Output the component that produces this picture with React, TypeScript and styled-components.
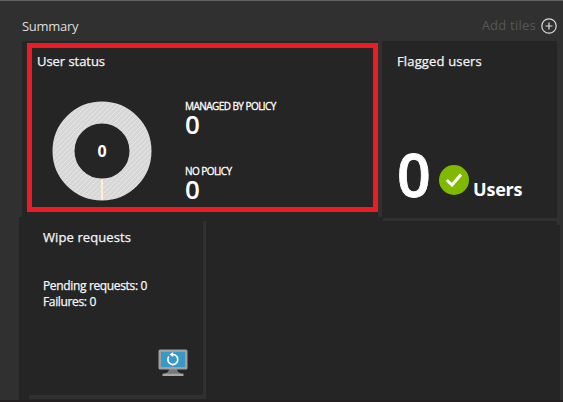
import React from 'react';
import styled, { createGlobalStyle } from 'styled-components';

const GlobalStyle = createGlobalStyle`
  * { box-sizing: border-box; }
  body { margin: 0; background: #303030; overflow: hidden; }
`;

const Page = styled.main`
  display: flex;
  flex-direction: column;
  width: 563px;
  height: 402px;
  border-top: 1px solid #626463;
  background: #303030;
  color: #fff;
  font-family: "Open Sans", "Noto Sans", sans-serif;
`;

const Header = styled.header`
  display: flex;
  justify-content: space-between;
  flex: none;
  height: 40px;
  padding: 15px 6px 0 22px;
`;

const Heading = styled.h1`
  margin: 0;
  color: #dedede;
  font-size: 13px;
  font-weight: 400;
  line-height: 20px;
  letter-spacing: -0.3px;
`;

const AddTiles = styled.button`
  display: flex;
  align-items: center;
  gap: 5px;
  height: 20px;
  padding: 0;
  border: 0;
  background: none;
  color: #555857;
  font: 400 13px/20px "Open Sans", sans-serif;
  letter-spacing: 0.24px;
`;

const AddLabel = styled.span`
  padding-bottom: 2px;
`;

const TopRow = styled.div`
  display: flex;
  gap: 4px;
  flex: none;
  height: 176px;
  padding: 0 6px 0 22px;
`;

const StatusTile = styled.section`
  width: 356px;
  padding: 2px 0 5px 5px;
  background: #252525;
`;

const Highlight = styled.div`
  height: 169px;
  padding: 4px 5px 0;
  border: 5px solid #ed1c24;
`;

const FlaggedTile = styled.section`
  width: 175px;
  padding: 11px 15px 0;
  background: #252525;
`;

const TileTitle = styled.h2`
  margin: 0;
  color: #f5f5f5;
  font-size: 13px;
  font-weight: 400;
  line-height: 18px;
  letter-spacing: ${({ $spacing = 0 }: { $spacing?: number }) => $spacing}px;
  white-space: nowrap;
  -webkit-text-stroke: 0.25px #f5f5f5;
`;

const StatusBody = styled.div`
  display: flex;
  padding: 30px 0 0 15px;
`;

const Metrics = styled.dl`
  display: grid;
  grid-auto-rows: 65px;
  margin: 0 0 0 33px;
`;

const Metric = styled.div`
  white-space: nowrap;
`;

const MetricLabel = styled.dt`
  font-size: 10px;
  line-height: 12px;
  letter-spacing: ${({ $spacing }: { $spacing: number }) => $spacing}px;
  -webkit-text-stroke: 0.3px #fff;
`;

const MetricValue = styled.dd`
  margin: -1px 0 0;
  font-size: 26px;
  font-weight: 600;
  line-height: 26px;
`;

const FlaggedBody = styled.div`
  display: flex;
  padding-top: 67px;
`;

const BigCount = styled.strong`
  width: 33px;
  font-family: "Open Sans", sans-serif;
  font-size: 59px;
  font-weight: 600;
  line-height: 74px;
  letter-spacing: -1px;
  -webkit-text-stroke: 0.8px #fff;
`;

const CheckIcon = styled.svg`
  margin: 28px 0 0 9px;
`;

const CountUnit = styled.strong`
  margin: 40px 0 0 4px;
  font-size: 18px;
  font-weight: 700;
  line-height: 24px;
  letter-spacing: -0.2px;
`;

const BottomRow = styled.div`
  display: flex;
  flex: none;
  width: 541px;
  height: 183px;
  margin-left: 19px;
  background: #252525;
`;

const WipeTile = styled.section`
  display: flex;
  flex-direction: column;
  width: 187px;
  height: 181px;
  padding: 11px 0 0 24px;
`;

const WipeStats = styled.p`
  margin: 32px 0 0;
  color: #f7f7f7;
  font-size: 12px;
  line-height: 16px;
  letter-spacing: -0.35px;
  white-space: nowrap;
  -webkit-text-stroke: 0.25px #f7f7f7;
`;

const WipeIcon = styled.svg`
  margin: 39px 0 0 115px;
`;

const Edges = styled.svg`
  position: absolute;
  top: 217px;
  left: 0;
  pointer-events: none;
`;

const BottomEdge = styled.div`
  flex: 1;
  background: #231f21;
`;

function PolicyDonut() {
  return (
    <svg width="100" height="102" viewBox="0 0 100 102">
      <defs>
        <pattern id="hatch" width="5" height="5" patternUnits="userSpaceOnUse">
          <rect width="5" height="5" fill="#d7d7d7" />
          <path d="M-1 1 1-1M0 5 5 0M4 6 6 4" stroke="#e8e8e8" strokeWidth="0.9" />
        </pattern>
      </defs>
      <circle cx="50" cy="51" r="38.5" fill="none" stroke="url(#hatch)" strokeWidth="22" />
      <path d="M50 79v21" stroke="#fff0cc" strokeWidth="2" />
      <text x="50" y="56.5" textAnchor="middle" fill="#fff" fontSize="16" fontWeight="700">0</text>
    </svg>
  );
}

export default function App() {
  return (
    <>
      <GlobalStyle />
      <Page>
        <Header>
          <Heading>Summary</Heading>
          <AddTiles>
            <AddLabel>Add tiles</AddLabel>
            <svg width="16" height="16" viewBox="0 0 16 16" fill="none" stroke="#dcdcdc">
              <circle cx="8" cy="8" r="7.2" strokeWidth="1.2" />
              <path d="M8 4.5v7M4.5 8h7" strokeWidth="1.2" />
            </svg>
          </AddTiles>
        </Header>
        <TopRow>
          <StatusTile>
            <Highlight>
              <TileTitle $spacing={-0.05}>User status</TileTitle>
              <StatusBody>
                <PolicyDonut />
                <Metrics>
                  <Metric>
                    <MetricLabel $spacing={-0.55}>MANAGED BY POLICY</MetricLabel>
                    <MetricValue>0</MetricValue>
                  </Metric>
                  <Metric>
                    <MetricLabel $spacing={-0.55}>NO POLICY</MetricLabel>
                    <MetricValue>0</MetricValue>
                  </Metric>
                </Metrics>
              </StatusBody>
            </Highlight>
          </StatusTile>
          <FlaggedTile>
            <TileTitle $spacing={0.15}>Flagged users</TileTitle>
            <FlaggedBody>
              <BigCount>0</BigCount>
              <CheckIcon width="30" height="30" viewBox="0 0 30 30">
                <circle cx="15" cy="15" r="15" fill="#7fba00" />
                <path d="m7.8 15 5.2 5L22 9.5" fill="none" stroke="#fff" strokeWidth="3" />
              </CheckIcon>
              <CountUnit>Users</CountUnit>
            </FlaggedBody>
          </FlaggedTile>
        </TopRow>
        <BottomRow>
          <WipeTile>
            <TileTitle $spacing={0.1}>Wipe requests</TileTitle>
            <WipeStats>
              Pending requests: 0<br />Failures: 0
            </WipeStats>
            <WipeIcon width="30" height="27" viewBox="0 0 30 27">
              <path d="M11 20h8q0 4 6 5v2H5v-2q6-1 6-5Z" fill="#777" />
              <path d="M4.5 24.7h21V27h-21z" fill="#a6a6a6" />
              <rect x=".5" y=".5" width="29" height="20" rx="1.5" fill="#a0a0a0" />
              <path d="M3 3h24v15H3z" fill="#3999c6" />
              <path d="M10.8 7.5a5 5 0 1 0 3.9-2" fill="none" stroke="#fff" strokeWidth="1.7" />
              <path d="m11.4 5.5 3.8-2.6v5.2z" fill="#fff" />
            </WipeIcon>
          </WipeTile>
        </BottomRow>
        <BottomEdge />
        <Edges width="563" height="185" viewBox="0 0 563 185">
          <path d="M383 1h174v3H383zM557 0h6v8h-6zM203 4h3v178h-3zM29 178h177v4H29z" fill="#303030" />
        </Edges>
      </Page>
    </>
  );
}
